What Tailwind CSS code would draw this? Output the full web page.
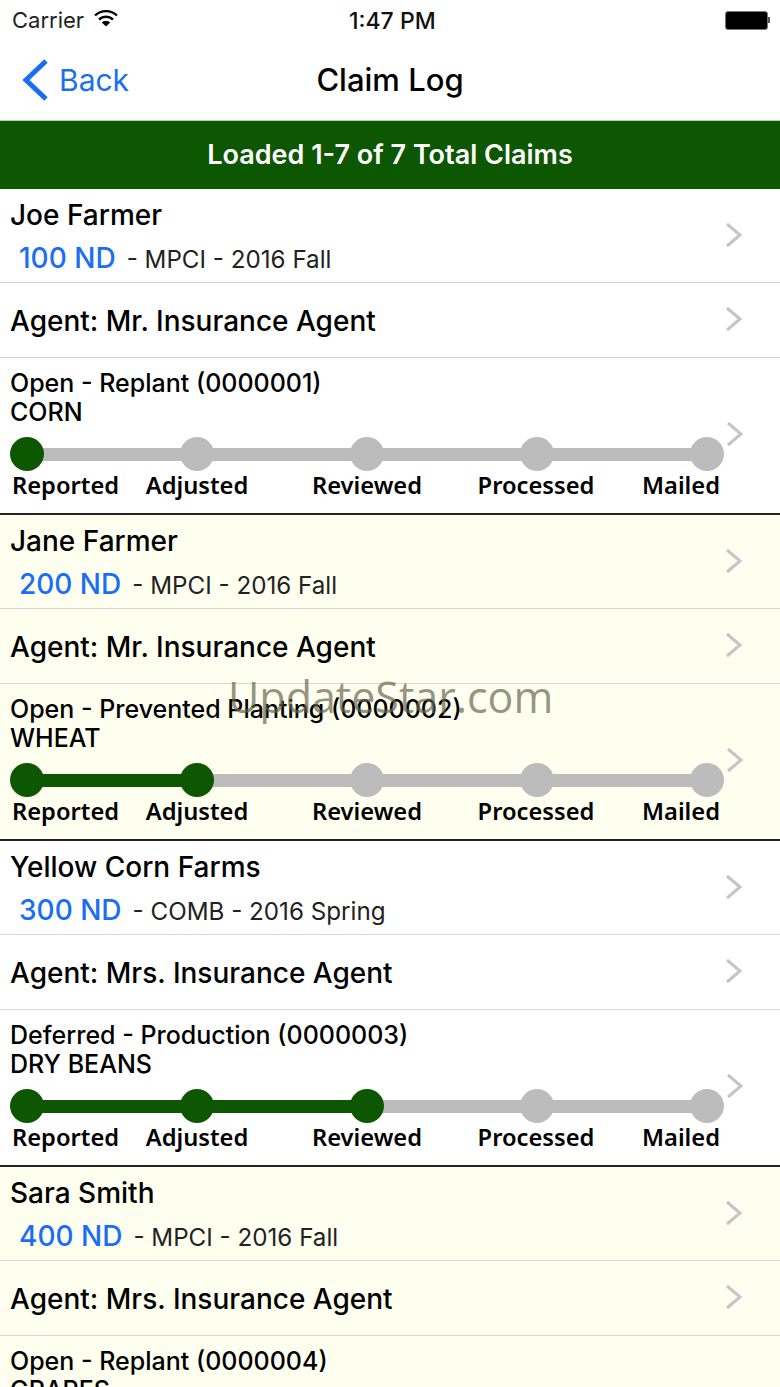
<!DOCTYPE html>
<html lang="en">
  <head>
    <meta charset="UTF-8" />
    <meta name="viewport" content="width=device-width, initial-scale=1.0" />
    <title>Claim Log</title>
    <script src="https://cdn.jsdelivr.net/npm/@tailwindcss/browser@4"></script>
  </head>
  <body class="bg-white">
    <div class="relative w-[780px] h-[1387px] overflow-hidden font-['Inter',sans-serif] text-black">
      <!-- Status bar -->
      <div class="relative flex items-center h-[40px] px-[12px] text-[22px]">
        <span class="text-[#222]">Carrier</span>
        <svg class="ml-[10px] mb-[4px]" width="24" height="18" viewBox="0 0 24 18" fill="none" stroke="#000">
          <path d="M1 6.5C7 0.7 17 0.7 23 6.5" stroke-width="2.4" />
          <path d="M5 10.5C9 6.8 15 6.8 19 10.5" stroke-width="2.4" />
          <path d="M12 17.5L7.8 13.5C10 11.6 14 11.6 16.2 13.5Z" fill="#000" stroke="none" />
        </svg>
        <span class="absolute left-[349px] top-[4px] text-[23px] font-medium text-[#111]">1:47 PM</span>
        <div class="ml-auto flex items-center mr-[-2px]">
          <div class="w-[43px] h-[19px] bg-black rounded-[3px] border border-[#777]"></div>
          <div class="w-[2px] h-[6px] bg-[#555]"></div>
        </div>
      </div>

      <!-- Nav bar -->
      <div class="relative flex items-center h-[81px] border-b border-[#b5d3ae]">
        <svg class="ml-[22px]" width="26" height="42" viewBox="0 0 26 42" fill="none" stroke="#1a6ef5" stroke-width="5">
          <path d="M24 2L4 21L24 40" />
        </svg>
        <span class="ml-[11px] text-[30px] text-[#1a6ef5]">Back</span>
        <span class="absolute left-0 right-0 text-center text-[31px] font-medium">Claim Log</span>
      </div>

      <!-- Loaded banner -->
      <div class="flex items-center justify-center h-[68px] bg-[#0d5602] text-white text-[27px] font-semibold">
        Loaded 1-7 of 7 Total Claims
      </div>

      <div id="claims"></div>

      <!-- Watermark -->
      <div class="absolute left-[228px] top-[668px] font-['Open_Sans',sans-serif] text-[43px] leading-[58px] text-[#66664f]/70">UpdateStar.com</div>
    </div>

    <script>
      const claims = [
        { name: "Joe Farmer", policy: "100 ND", detail: "- MPCI - 2016 Fall", agent: "Mr. Insurance Agent", status: "Open - Replant (0000001)", crop: "CORN", done: 1 },
        { name: "Jane Farmer", policy: "200 ND", detail: "- MPCI - 2016 Fall", agent: "Mr. Insurance Agent", status: "Open - Prevented Planting (0000002)", crop: "WHEAT", done: 2 },
        { name: "Yellow Corn Farms", policy: "300 ND", detail: "- COMB - 2016 Spring", agent: "Mrs. Insurance Agent", status: "Deferred - Production (0000003)", crop: "DRY BEANS", done: 3 },
        { name: "Sara Smith", policy: "400 ND", detail: "- MPCI - 2016 Fall", agent: "Mrs. Insurance Agent", status: "Open - Replant (0000004)", crop: "GRAPES", done: 1 },
      ];

      const chevron = `<svg class="shrink-0" width="18" height="26" viewBox="0 0 18 26" fill="none" stroke="#c4c4ca" stroke-width="3"><path d="M2 2L15 13L2 24" /></svg>`;

      function renderSteps(done) {
        let dots = "";
        for (let i = 0; i < 5; i++) {
          dots += `<div class="w-[34px] h-[34px] rounded-full z-10 ${i < done ? "bg-[#0d5602]" : "bg-[#bcbcbc]"}"></div>`;
        }
        // coloured part of the track, each step is a quarter of the line
        const pct = ((done - 1) / 4) * 100;
        return `
          <div class="relative flex justify-between w-[714px] mt-[10px]">
            <div class="absolute left-[17px] right-[17px] top-[11px] h-[13px] bg-[#bcbcbc]">
              <div class="h-full bg-[#0d5602]" style="width: ${pct}%"></div>
            </div>
            ${dots}
          </div>
          <div class="grid grid-cols-[115px_140px_200px_138px_115px] ml-[2px] -mt-[2px] text-[23.7px] leading-[32px] font-semibold font-['Noto_Sans',sans-serif]">
            <span>Reported</span>
            <span class="text-center">Adjusted</span>
            <span class="text-center">Reviewed</span>
            <span class="text-center">Processed</span>
            <span class="text-right">Mailed</span>
          </div>`;
      }

      function renderClaim(claim, index) {
        const bg = index % 2 === 1 ? "bg-[#fffff0]" : "bg-white";
        return `
          <div class="${bg} border-b-2 border-[#222]">
            <div class="flex items-center h-[94px] pl-[10px] pr-[37px] border-b border-[#d5d5d5]">
              <div class="flex-1 pt-[4px]">
                <div class="text-[28px] leading-[36px] font-medium">${claim.name}</div>
                <div class="flex items-baseline mt-[7px] leading-[36px]">
                  <span class="ml-[9px] text-[28px] font-medium text-[#1a6ef5]">${claim.policy}</span>
                  <span class="ml-[11px] text-[24.2px] text-[#222]">${claim.detail}</span>
                </div>
              </div>
              <div class="mb-[2px]">${chevron}</div>
            </div>
            <div class="flex items-center h-[75px] pl-[10px] pr-[37px] border-b border-[#d5d5d5]">
              <div class="flex-1 pt-[2px] text-[28px] font-medium">Agent: ${claim.agent}</div>
              <div class="mb-[2px]">${chevron}</div>
            </div>
            <div class="flex items-start h-[155px] pl-[10px] pr-[37px] pt-[11px]">
              <div class="w-[716px] shrink-0">
                <div class="text-[25px] leading-[29px] font-medium">${claim.status}</div>
                <div class="text-[25px] leading-[29px] font-medium">${claim.crop}</div>
                ${renderSteps(claim.done)}
              </div>
              <div class="ml-auto mt-[52px] -mr-[1px]">${chevron}</div>
            </div>
          </div>`;
      }

      document.getElementById("claims").innerHTML = claims.map(renderClaim).join("");
    </script>
  </body>
</html>
